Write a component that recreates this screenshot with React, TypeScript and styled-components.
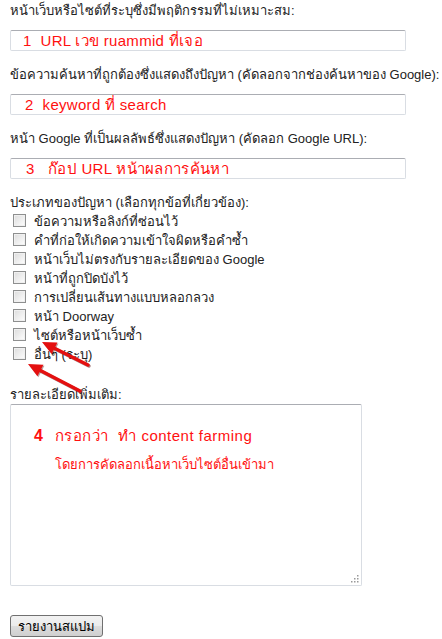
import React from "react";
import styled, { createGlobalStyle } from "styled-components";

const Global = createGlobalStyle`
  html, body { margin: 0; padding: 0; background: #ffffff; }
  body { font-family: "Liberation Sans", Arial, "Noto Sans", sans-serif; font-size: 13px; color: #222; }
`;

const Page = styled.div`
  position: relative;
  width: 442px;
  height: 639px;
  padding: 2px 0 0 10px;
  box-sizing: border-box;
  overflow: hidden;
`;

const Section = styled.div<{ $mt?: number }>`
  margin-top: ${(p) => p.$mt ?? 15}px;
  &:first-child { margin-top: 0; }
`;

const Label = styled.div`
  line-height: 18px;
  height: 18px;
  white-space: nowrap;
`;

const InputBox = styled.div`
  margin-top: 10px;
  width: 396px;
  height: 21px;
  box-sizing: border-box;
  border: 1px solid #d9dde3;
  border-top-color: #abadb3;
  border-radius: 2px;
  display: flex;
  align-items: center;
`;

const RedText = styled.span<{ $pl?: number }>`
  color: #ff1010;
  font-size: 15px;
  letter-spacing: 0.3px;
  padding-left: ${(p) => p.$pl ?? 12}px;
  white-space: pre;
`;

const CheckList = styled.div`
  display: flex;
  flex-direction: column;
`;

const CheckRow = styled.label`
  display: flex;
  align-items: center;
  height: 19px;
  padding-left: 3px;
  gap: 8px;
  white-space: nowrap;
`;

const Box = styled.span`
  width: 13px;
  height: 13px;
  box-sizing: border-box;
  border: 1px solid #8e8f8f;
  background: linear-gradient(135deg, #dcdcdc 0%, #f4f4f4 70%, #ffffff 100%);
  box-shadow: inset 0 0 0 1px #f0f0f0;
  flex: none;
  margin-top: -2px;
`;

const AreaBox = styled.div`
  position: relative;
  width: 352px;
  height: 182px;
  box-sizing: border-box;
  border: 1px solid #d9dde3;
  border-top-color: #abadb3;
  border-radius: 2px;
  padding: 16px 0 0 23px;
  display: flex;
  gap: 12px;
  color: #ff1010;
`;

const AreaNum = styled.div`
  font-weight: bold;
  font-size: 16px;
  line-height: 30px;
`;

const AreaLines = styled.div`
  display: flex;
  flex-direction: column;
`;

const AreaLine = styled.div<{ $size: number; $ls: number }>`
  font-size: ${(p) => p.$size}px;
  letter-spacing: ${(p) => p.$ls}px;
  line-height: 29px;
  white-space: pre;
`;

const Grip = styled.svg`
  position: absolute;
  right: 2px;
  bottom: 2px;
`;

const Button = styled.button`
  margin-top: 29px;
  width: 93px;
  height: 22px;
  border: 1px solid #707070;
  border-radius: 3px;
  background: linear-gradient(#f2f2f2 0%, #ebebeb 50%, #dddddd 51%, #cfcfcf 100%);
  font-family: "Liberation Sans", Arial, sans-serif;
  font-size: 13px;
  color: #000;
  padding: 0;
  display: block;
`;

const Overlay = styled.svg`
  position: absolute;
  left: 0;
  top: 0;
  pointer-events: none;
`;

const items = [
  "ข้อความหรือลิงก์ที่ซ่อนไว้",
  "คำที่ก่อให้เกิดความเข้าใจผิดหรือคำซ้ำ",
  "หน้าเว็บไม่ตรงกับรายละเอียดของ Google",
  "หน้าที่ถูกปิดบังไว้",
  "การเปลี่ยนเส้นทางแบบหลอกลวง",
  "หน้า Doorway",
  "ไซต์หรือหน้าเว็บซ้ำ",
  "อื่นๆ (ระบุ)",
];

function Arrow({ x1, y1, x2, y2 }: { x1: number; y1: number; x2: number; y2: number }) {
  const ang = Math.atan2(y2 - y1, x2 - x1);
  const len = 14;
  const w = 6.5;
  const bx = x2 - Math.cos(ang) * len;
  const by = y2 - Math.sin(ang) * len;
  const px = -Math.sin(ang) * w;
  const py = Math.cos(ang) * w;
  const head = `${x2},${y2} ${bx + px},${by + py} ${bx - px},${by - py}`;
  return (
    <g>
      <line x1={x1 + 1} y1={y1 + 1} x2={bx + 1} y2={by + 1} stroke="#5a1010" strokeOpacity={0.5} strokeWidth={3.5} strokeLinecap="round" />
      <polygon points={head} fill="#5a1010" fillOpacity={0.4} transform="translate(1,1)" />
      <line x1={x1} y1={y1} x2={bx} y2={by} stroke="#e41010" strokeWidth={3.5} strokeLinecap="round" />
      <polygon points={head} fill="#e41010" />
    </g>
  );
}

export default function App() {
  return (
    <>
      <Global />
      <Page>
        <Section>
          <Label>หน้าเว็บหรือไซต์ที่ระบุซึ่งมีพฤติกรรมที่ไม่เหมาะสม:</Label>
          <InputBox>
            <RedText $pl={12}>1  URL เวข ruammid ที่เจอ</RedText>
          </InputBox>
        </Section>
        <Section>
          <Label>ข้อความค้นหาที่ถูกต้องซึ่งแสดงถึงปัญหา (คัดลอกจากช่องค้นหาของ Google):</Label>
          <InputBox>
            <RedText $pl={14}>2  keyword ที่ search</RedText>
          </InputBox>
        </Section>
        <Section>
          <Label>หน้า Google ที่เป็นผลลัพธ์ซึ่งแสดงปัญหา (คัดลอก Google URL):</Label>
          <InputBox>
            <RedText $pl={15}>3   ก๊อป URL หน้าผลการค้นหา</RedText>
          </InputBox>
        </Section>
        <Section>
          <Label>ประเภทของปัญหา (เลือกทุกข้อที่เกี่ยวข้อง):</Label>
          <CheckList>
            {items.map((t) => (
              <CheckRow key={t}>
                <Box />
                <span>{t}</span>
              </CheckRow>
            ))}
          </CheckList>
        </Section>
        <Section $mt={22}>
          <Label>รายละเอียดเพิ่มเติม:</Label>
          <AreaBox>
            <AreaNum>4</AreaNum>
            <AreaLines>
              <AreaLine $size={15} $ls={0.5}>{"กรอกว่า  ทำ content farming"}</AreaLine>
              <AreaLine $size={13} $ls={0}>{"โดยการคัดลอกเนื้อหาเว็บไซต์อื่นเข้ามา"}</AreaLine>
            </AreaLines>
            <Grip width="8" height="8" viewBox="0 0 8 8">
              <rect x="6" y="0" width="1.5" height="1.5" fill="#999" />
              <rect x="3" y="3" width="1.5" height="1.5" fill="#999" />
              <rect x="6" y="3" width="1.5" height="1.5" fill="#999" />
              <rect x="0" y="6" width="1.5" height="1.5" fill="#999" />
              <rect x="3" y="6" width="1.5" height="1.5" fill="#999" />
              <rect x="6" y="6" width="1.5" height="1.5" fill="#999" />
            </Grip>
          </AreaBox>
        </Section>
        <Button>รายงานสแปม</Button>
        <Overlay width="442" height="639" viewBox="0 0 442 639">
          <Arrow x1={88} y1={365} x2={42} y2={342} />
          <Arrow x1={80} y1={391} x2={28} y2={364} />
        </Overlay>
      </Page>
    </>
  );
}
